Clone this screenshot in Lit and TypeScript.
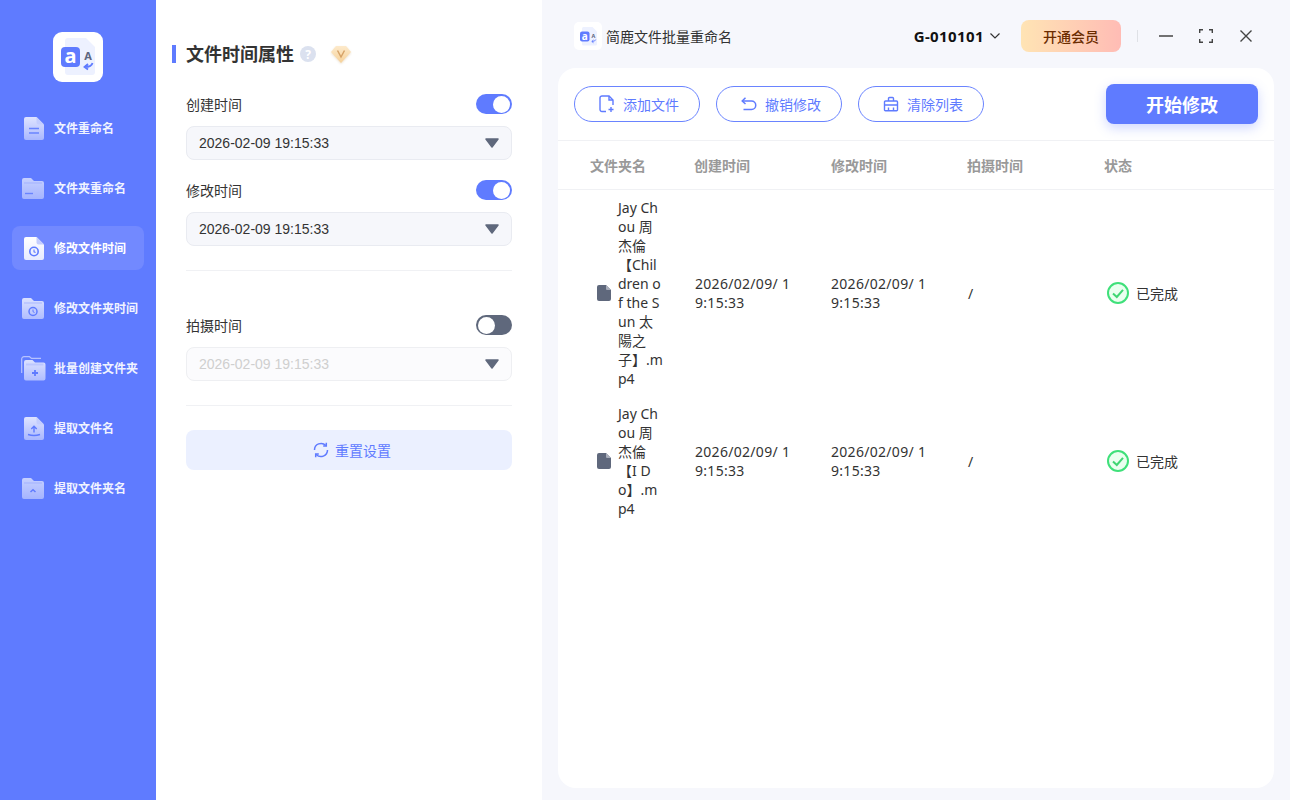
import { LitElement, html, css, svg } from "lit";
import { customElement } from "lit/decorators.js";

const grad = (id: string, a: string, b: string) => svg`<defs><linearGradient id=${id} x1="0" y1="0" x2="0" y2="1"><stop offset="0" stop-color=${a}/><stop offset="1" stop-color=${b}/></linearGradient></defs>`;
const sideSvg = (w: number, h: number, vb: string, inner: unknown) => html`<svg width=${w} height=${h} viewBox=${vb} fill="none">${inner}</svg>`;

const docPath = "M2 0H12.5L20 7.5V21a2 2 0 0 1-2 2H2a2 2 0 0 1-2-2V2a2 2 0 0 1 2-2Z";
const folderPath = "M2 0H9L12 3H20a2 2 0 0 1 2 2V19a2 2 0 0 1-2 2H2a2 2 0 0 1-2-2V2a2 2 0 0 1 2-2Z";

const icons = [
  sideSvg(20, 23, "0 0 20 23", svg`${grad("g1", "#dfe4ff", "#a9b7ff")}<path d=${docPath} fill="url(#g1)"/><path d="M12.5 0L20 7.5H14.5a2 2 0 0 1-2-2Z" fill="#c3cdff"/><path d="M5 11.5H15M5 16H15" stroke="#6a84ff" stroke-width="1.6"/>`),
  sideSvg(22, 21, "0 0 22 21", svg`${grad("g2", "#c6d0ff", "#a5b4ff")}<path d=${folderPath} fill="url(#g2)"/><path d="M2 5H20" stroke="#b0bdff" stroke-width="2"/><path d="M3 15.5H11" stroke="#6a84ff" stroke-width="1.4"/>`),
  sideSvg(20, 23, "0 0 20 23", svg`${grad("g3", "#ffffff", "#e6eaff")}<path d=${docPath} fill="url(#g3)"/><path d="M12.5 0L20 7.5H14.5a2 2 0 0 1-2-2Z" fill="#c3cdff"/><circle cx="10" cy="14.5" r="4.2" stroke="#5f7bff" stroke-width="1.6"/><path d="M10 12.5V14.8L11.6 15.6" stroke="#5f7bff" stroke-width="1.1"/>`),
  sideSvg(22, 21, "0 0 22 21", svg`${grad("g4", "#dbe1ff", "#b0bdff")}<path d=${folderPath} fill="url(#g4)"/><path d="M2 5H20" stroke="#bcc7ff" stroke-width="2"/><circle cx="11" cy="13.5" r="4" stroke="#5f7bff" stroke-width="1.5"/><path d="M11 11.5V13.7L12.5 14.5" stroke="#5f7bff" stroke-width="1"/>`),
  sideSvg(25, 25, "0 0 25 25", svg`${grad("g5", "#dbe1ff", "#b0bdff")}<path d="M.7 17V3A2.3 2.3 0 0 1 3 .7H8.5L10.5 2.4H20" stroke="#b6c2ff" stroke-width="1.2"/><path d="M5 4H11.5L14 6.5H22.5a2 2 0 0 1 2 2V22.500a2 2 0 0 1-2 2H5a2 2 0 0 1-2-2V6a2 2 0 0 1 2-2Z" fill="url(#g5)"/><path d="M5 8.500H22.500" stroke="#bcc7ff" stroke-width="2"/><path d="M14 14V20M11 17H17" stroke="#5f7bff" stroke-width="1.8"/>`),
  sideSvg(20, 23, "0 0 20 23", svg`${grad("g6", "#dfe4ff", "#a9b7ff")}<path d=${docPath} fill="url(#g6)"/><path d="M12.500 0L20 7.500H14.500a2 2 0 0 1-2-2Z" fill="#c3cdff"/><path d="M10 15.500V9.500M7.300 12L10 9.300L12.700 12" stroke="#5f7bff" stroke-width="1.400"/><path d="M4 17.500Q10 19.500 16 17.500" stroke="#5f7bff" stroke-width="1.400"/>`),
  sideSvg(22, 21, "0 0 22 21", svg`${grad("g7", "#c6d0ff", "#a5b4ff")}<path d=${folderPath} fill="url(#g7)"/><path d="M2 5H20" stroke="#b0bdff" stroke-width="2"/><path d="M8.500 14L11 11.700L13.500 14" stroke="#5f7bff" stroke-width="1.500"/>`),
];

const navItems = ["文件重命名", "文件夹重命名", "修改文件时间", "修改文件夹时间", "批量创建文件夹", "提取文件名", "提取文件夹名"];

const logo = (size: number) => html`<svg width=${size} height=${size} viewBox="0 0 50 50" fill="none">
  <path d="M15 6H33L42 15V40a3 3 0 0 1-3 3H15a3 3 0 0 1-3-3V9a3 3 0 0 1 3-3Z" fill="#edf1ff"/>
  <rect x="8" y="15" width="19" height="20" rx="4" fill="#5f7bff"/>
  <text x="17.500" y="31" text-anchor="middle" font-family="Noto Sans" font-weight="700" font-size="20" fill="#fff">a</text>
  <text x="35" y="28" text-anchor="middle" font-family="Noto Sans" font-weight="700" font-size="11" fill="#5d6680">A</text>
  <path d="M39.500 31Q38.500 35 32 35M35 32L31.500 35L35 37.500" stroke="#5f7bff" stroke-width="1.800"/>
</svg>`;

@customElement("app-root")
export class AppRoot extends LitElement {
  static styles = css`
    :host { display: block; width: 1290px; height: 800px; overflow: hidden; font-family: "Noto Sans", "Noto Sans CJK SC", sans-serif; color: #333; }
    .app { display: flex; width: 1290px; height: 800px; }
    .side { width: 156px; flex: none; background: #5f7bff; display: flex; flex-direction: column; align-items: center; }
    .logo { width: 50px; height: 50px; margin: 32px 0 24px; background: #fff; border-radius: 9px; }
    .nav { display: flex; flex-direction: column; gap: 16px; width: 132px; }
    .nav-item { height: 44px; border-radius: 8px; display: flex; align-items: center; color: #f0f3ff; font-size: 12px; font-weight: 700; white-space: nowrap; }
    .nav-item.on { background: #7289ff; color: #fff; }
    .nav-ic { width: 42px; flex: none; display: flex; justify-content: center; padding-left: 2px; box-sizing: border-box; }
    .nav-item.wide .nav-ic { padding-left: 0; }
    .mid { width: 386px; flex: none; background: #fff; box-sizing: border-box; padding: 45px 30px 0 16px; }
    .title { display: flex; align-items: center; height: 18px; }
    .bar { width: 4px; height: 18px; background: #5f7bff; margin-right: 10px; }
    .title b { font-size: 18px; color: #333; line-height: 18px; }
    .help { margin-left: 6px; width: 16px; height: 16px; border-radius: 50%; background: #dbe1ef; color: #fff; font-size: 12px; font-weight: 700; display: flex; align-items: center; justify-content: center; }
    .vip { margin-left: 15px; display: flex; filter: drop-shadow(0 1px 1px rgba(200,170,120,.35)); }
    .form { margin-left: 14px; padding-top: 31px; }
    .row { display: flex; align-items: center; justify-content: space-between; height: 20px; font-size: 14px; color: #333; }
    .tg { width: 36px; height: 20px; border-radius: 10px; background: #5f7bff; position: relative; }
    .tg::after { content: ""; position: absolute; top: 1.5px; right: 2px; width: 17px; height: 17px; border-radius: 50%; background: #fff; }
    .tg.off { background: #5f687c; }
    .tg.off::after { right: auto; left: 2px; }
    .sel { margin-top: 12px; height: 34px; box-sizing: border-box; border: 1px solid #e9ebf1; border-radius: 8px; background: #f6f7fb; display: flex; align-items: center; justify-content: space-between; padding: 0 12px; font: 14px "Liberation Sans", sans-serif; color: #333; }
    .sel.off { background: #fbfbfd; border-color: #eeeff2; color: #cfcfcf; }
    .second { margin-top: 20px; }
    .hr { height: 1px; background: #f0f1f4; }
    .hr1 { margin-top: 24px; }
    .third { margin-top: 44px; }
    .hr2 { margin-top: 24px; }
    .reset { margin-top: 24px; height: 40px; border-radius: 8px; background: #ebf0ff; color: #5f7bff; display: flex; align-items: center; justify-content: center; gap: 6px; font-size: 14px; padding-left: 6px; box-sizing: border-box; }
    .main { flex: 1; background: #f6f7fc; box-sizing: border-box; padding: 0 16px 12px; display: flex; flex-direction: column; }
    .head { height: 68px; flex: none; box-sizing: border-box; display: flex; align-items: center; padding: 4px 0 0 16px; }
    .mini { width: 28px; height: 28px; border-radius: 5px; background: #fff; display: flex; align-items: center; justify-content: center; }
    .name { margin-left: 4px; font-size: 14px; color: #333; white-space: nowrap; }
    .acct { margin-left: auto; font-size: 15px; font-weight: 700; color: #111; display: flex; align-items: center; gap: 6px; letter-spacing: .4px; }
    .open { margin-left: 21px; width: 100px; height: 32px; border-radius: 8px; background: linear-gradient(90deg, #ffe4b4, #ffbcb5); color: #6b2c00; font-size: 14px; font-weight: 500; display: flex; align-items: center; justify-content: center; }
    .sep { width: 1px; height: 12px; background: #dfe1e6; margin: 0 21px 0 16px; }
    .win { display: flex; align-items: center; gap: 26px; padding-right: 22px; }
    .win svg { display: block; }
    .win svg:last-child { margin-left: 1px; }
    .card { flex: 1; background: #fff; border-radius: 18px; display: flex; flex-direction: column; }
    .tools { height: 73px; flex: none; box-sizing: border-box; border-bottom: 1px solid #f0f1f4; padding: 0 16px 1px; display: flex; align-items: center; gap: 16px; }
    .btn { width: 126px; height: 36px; box-sizing: border-box; border: 1px solid #6a84ff; border-radius: 18px; color: #5f7bff; font-size: 14px; display: flex; align-items: center; padding-left: 24px; gap: 8px; }
    .start { margin-left: auto; width: 152px; height: 40px; border-radius: 8px; background: #5f7bff; color: #fff; font-size: 18px; font-weight: 700; display: flex; align-items: center; justify-content: center; box-shadow: 0 4px 12px rgba(95,123,255,.3); }
    .grid { display: grid; grid-template-columns: 120px 137px 136px 137px 1fr; padding: 0 16px; }
    .thead { height: 49px; box-sizing: border-box; border-bottom: 1px solid #f0f1f4; align-items: center; font-size: 14px; font-weight: 700; color: #999; }
    .thead span:first-child { padding-left: 16px; }
    .rows { padding-top: 8px; display: flex; flex-direction: column; gap: 16px; }
    .tr { align-items: center; font-size: 14px; line-height: 19px; color: #333; }
    .file { display: flex; align-items: center; padding-left: 23px; }
    .file svg { flex: none; margin-right: 7px; }
    .fname { width: 46px; word-break: break-all; }
    .date { width: 100px; word-break: break-all; letter-spacing: .3px; }
    .date.first { padding-left: 1px; }
    .slash { padding-left: 1px; }
    .st { display: flex; align-items: center; gap: 7px; padding-left: 3px; }
  `;

  private check() {
    return html`<svg width="22" height="22" viewBox="0 0 22 22" fill="none"><circle cx="11" cy="11" r="10" fill="#eafff0" stroke="#3fe07a" stroke-width="2"/><path d="M6 11.500L9.800 15L16 7.800" stroke="#3fd673" stroke-width="2"/></svg>`;
  }
  private fileIc() {
    return html`<svg width="14" height="16" viewBox="0 0 14 16" fill="none"><path d="M2 0H9L14 5V14a2 2 0 0 1-2 2H2a2 2 0 0 1-2-2V2a2 2 0 0 1 2-2Z" fill="#5f687c"/><path d="M9 0L14 5H10a1 1 0 0 1-1-1Z" fill="#a9aebb"/></svg>`;
  }
  private tri() {
    return html`<svg width="14" height="10" viewBox="0 0 14 10"><path d="M1 1H13L7 9Z" fill="#5f687c" stroke="#5f687c" stroke-width="1.500" stroke-linejoin="round"/></svg>`;
  }

  render() {
    const d = "2026-02-09 19:15:33";
    const t = "2026/02/09/ 19:15:33";
    return html`<div class="app">
      <aside class="side">
        <div class="logo">${logo(50)}</div>
        <nav class="nav">
          ${navItems.map((n, i) => html`<div class="nav-item ${i === 2 ? "on" : ""} ${[1, 3, 4, 6].includes(i) ? "wide" : ""}"><span class="nav-ic">${icons[i]}</span>${n}</div>`)}
        </nav>
      </aside>
      <section class="mid">
        <div class="title"><span class="bar"></span><b>文件时间属性</b><span class="help">?</span>
          <span class="vip"><svg width="20" height="18" viewBox="0 0 20 18" fill="none"><defs><linearGradient id="vg" x1="0" y1="0" x2="0" y2="1"><stop offset="0" stop-color="#fdeacb"/><stop offset="1" stop-color="#f6d199"/></linearGradient></defs><path d="M5 1H15L20 7L10 18L0 7Z" fill="url(#vg)"/><path d="M6.500 5.500L10 12L13.500 5.500" stroke="#d6a368" stroke-width="1.500"/></svg></span>
        </div>
        <div class="form">
          <div class="row">创建时间<span class="tg"></span></div>
          <div class="sel">${d}${this.tri()}</div>
          <div class="row second">修改时间<span class="tg"></span></div>
          <div class="sel">${d}${this.tri()}</div>
          <div class="hr hr1"></div>
          <div class="row third">拍摄时间<span class="tg off"></span></div>
          <div class="sel off">${d}${this.tri()}</div>
          <div class="hr hr2"></div>
          <div class="reset"><svg width="16" height="16" viewBox="0 0 16 16" fill="none" stroke="#5f7bff" stroke-width="1.500"><path d="M1.500 8A6.500 6.500 0 0 1 12.800 3.600M14.500 8A6.500 6.500 0 0 1 3.200 12.400"/><path d="M13.300 .8V4H10.200M2.700 15.200V12H5.800"/></svg>重置设置</div>
        </div>
      </section>
      <section class="main">
        <header class="head">
          <span class="mini">${logo(25)}</span>
          <span class="name">简鹿文件批量重命名</span>
          <span class="acct">G-010101<svg width="10" height="6" viewBox="0 0 10 6" fill="none"><path d="M.5 .5L5 5L9.500 .5" stroke="#333" stroke-width="1.200"/></svg></span>
          <span class="open">开通会员</span>
          <span class="sep"></span>
          <span class="win">
            <svg width="14" height="14" viewBox="0 0 14 14" fill="none"><path d="M0 7H14" stroke="#444" stroke-width="1.500"/></svg>
            <svg width="14" height="14" viewBox="0 0 14 14" fill="none"><path d="M.7 4V.7H4M10 .7H13.300V4M13.300 10V13.300H10M4 13.300H.7V10" stroke="#444" stroke-width="1.400"/></svg>
            <svg width="12" height="12" viewBox="0 0 12 12" fill="none"><path d="M.5 .5L11.500 11.500M11.500 .5L.5 11.500" stroke="#444" stroke-width="1.400"/></svg>
          </span>
        </header>
        <div class="card">
          <div class="tools">
            <span class="btn"><svg width="16" height="18" viewBox="0 0 16 18" fill="none" stroke="#5f7bff" stroke-width="1.400"><path d="M7 16.500H3A2 2 0 0 1 1 14.500V3A2 2 0 0 1 3 1H10L14 5V10"/><path d="M10 1V5H14"/><path d="M12 12V17M9.500 14.500H14.500"/></svg>添加文件</span>
            <span class="btn"><svg width="16" height="14" viewBox="0 0 16 14" fill="none" stroke="#5f7bff" stroke-width="1.500"><path d="M4.500 .8L1.200 4L4.500 7"/><path d="M1.500 4H10.500A4.200 4.200 0 0 1 10.500 12.500H2.500"/></svg>撤销修改</span>
            <span class="btn"><svg width="16" height="16" viewBox="0 0 16 16" fill="none" stroke="#5f7bff" stroke-width="1.400"><path d="M5.500 5V2.500A1 1 0 0 1 6.500 1.500H9.500A1 1 0 0 1 10.500 2.500V5"/><path d="M2.500 5H13.500A1 1 0 0 1 14.500 6V13.500A1 1 0 0 1 13.500 14.800H2.500A1 1 0 0 1 1.500 13.500V6A1 1 0 0 1 2.500 5Z"/><path d="M1.500 9H14.500M5.500 11.500V14.800M10.500 11.500V14.800"/></svg>清除列表</span>
            <span class="start">开始修改</span>
          </div>
          <div class="grid thead"><span>文件夹名</span><span>创建时间</span><span>修改时间</span><span>拍摄时间</span><span>状态</span></div>
          <div class="rows">
            ${["Jay Chou 周杰倫【Children of the Sun 太陽之子】.mp4", "Jay Chou 周杰倫【I Do】.mp4"].map((f) => html`<div class="grid tr">
              <div class="file">${this.fileIc()}<span class="fname">${f}</span></div>
              <div class="date first">${t}</div>
              <div class="date">${t}</div>
              <div class="slash">/</div>
              <div class="st">${this.check()}已完成</div>
            </div>`)}
          </div>
        </div>
      </section>
    </div>`;
  }
}
